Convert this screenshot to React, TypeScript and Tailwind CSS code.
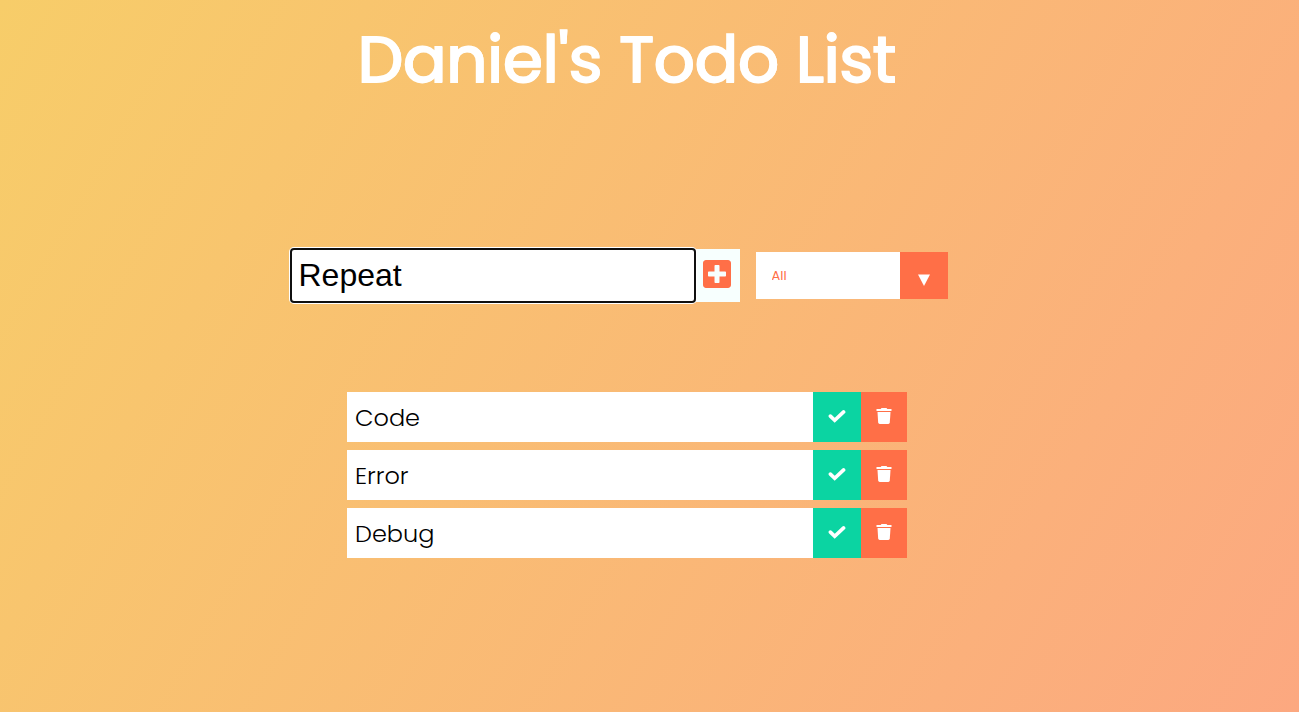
import { useState } from "react";
import type { FormEvent } from "react";
import { FaPlusSquare } from "react-icons/fa";

type Todo = { id: number; text: string; completed: boolean };

const initialTodos: Todo[] = [
  { id: 1, text: "Code", completed: false },
  { id: 2, text: "Error", completed: false },
  { id: 3, text: "Debug", completed: false },
];

function CheckIcon() {
  return (
    <svg width="18" height="16" viewBox="0 0 18 16" fill="none" aria-hidden="true">
      <path
        d="M2.4 8.1L6.7 12.2L15.6 3.9"
        stroke="currentColor"
        strokeWidth="3.6"
        strokeLinecap="round"
        strokeLinejoin="miter"
      />
    </svg>
  );
}

function TrashIcon() {
  return (
    <svg width="16" height="16" viewBox="0 0 16 16" fill="currentColor" aria-hidden="true">
      <path d="M0.5 1H4.7L5.2 0.3Q5.4 0 5.8 0H10.2Q10.6 0 10.8 0.3L11.3 1H15.5V3H0.5Z" />
      <path d="M1.5 4H14.5L13.8 14.6Q13.7 16 12.3 16H3.7Q2.3 16 2.2 14.6Z" />
    </svg>
  );
}

export default function App() {
  const [todos, setTodos] = useState(initialTodos);
  const [text, setText] = useState("Repeat");
  const [filter, setFilter] = useState("all");

  const addTodo = (event: FormEvent) => {
    event.preventDefault();
    if (!text.trim()) return;
    setTodos([...todos, { id: Date.now(), text, completed: false }]);
    setText("");
  };

  const visible = todos.filter(
    (todo) => filter === "all" || todo.completed === (filter === "completed"),
  );

  return (
    <div className="flex min-h-screen flex-col items-center bg-[linear-gradient(120deg,#f7cd69_0%,#fca880_100%)] pr-[45px] font-['Poppins','Inter',sans-serif]">
      <header className="pt-3">
        <h1 className="text-[64px] leading-[96px] font-normal whitespace-nowrap text-white [-webkit-text-stroke:2px_white] [text-shadow:1px_0_white]">
          Daniel's Todo List
        </h1>
      </header>

      <form onSubmit={addTodo} className="mt-[141px] flex items-center">
        <div className="flex">
          <input
            type="text"
            aria-label="New todo"
            value={text}
            onChange={(event) => setText(event.target.value)}
            className="z-10 -my-px -ml-px h-[55px] w-[406px] rounded-sm border-2 border-[#101010] bg-white px-[7px] font-['Liberation_Sans',Arial,sans-serif] text-[32px] leading-9 text-black ring-1 ring-white outline-none"
          />
          <button
            type="submit"
            aria-label="Add todo"
            className="flex h-[53px] w-11 items-center justify-center bg-[#f7fffe] pr-px text-[#ff6f47]"
          >
            <FaPlusSquare size={32} className="-mt-1" />
          </button>
        </div>
        <div className="relative mx-4">
          <select
            aria-label="Filter todos"
            value={filter}
            onChange={(event) => setFilter(event.target.value)}
            className="block h-[47px] w-48 cursor-pointer appearance-none bg-white px-4 text-[13px] text-[#ff6f47] outline-none"
          >
            <option value="all">All</option>
            <option value="completed">Completed</option>
            <option value="uncompleted">Uncompleted</option>
          </select>
          <span
            aria-hidden="true"
            className="pointer-events-none absolute inset-y-0 right-0 flex w-12 items-center justify-center bg-[#ff6f47] pt-2 text-white"
          >
            <svg width="12" height="12" viewBox="0 0 12 12" fill="currentColor">
              <path d="M0 0.5H12L6 12Z" />
            </svg>
          </span>
        </div>
      </form>

      <ul className="mt-[90px] flex w-[560px] flex-col gap-2">
        {visible.map((todo) => (
          <li key={todo.id} className="flex h-[50px] bg-white text-2xl font-light text-black">
            <span
              className={
                todo.completed
                  ? "flex flex-1 items-center px-2 pt-0.5 line-through opacity-50"
                  : "flex flex-1 items-center px-2 pt-0.5"
              }
            >
              {todo.text}
            </span>
            <button
              type="button"
              aria-label={`Complete ${todo.text}`}
              onClick={() =>
                setTodos(
                  todos.map((item) =>
                    item.id === todo.id ? { ...item, completed: !item.completed } : item,
                  ),
                )
              }
              className="flex w-12 items-center justify-center bg-[#0bd4a2] pb-0.5 text-white"
            >
              <CheckIcon />
            </button>
            <button
              type="button"
              aria-label={`Delete ${todo.text}`}
              onClick={() => setTodos(todos.filter((item) => item.id !== todo.id))}
              className="flex w-[46px] items-center justify-center bg-[#ff6f47] pb-0.5 text-white"
            >
              <TrashIcon />
            </button>
          </li>
        ))}
      </ul>
    </div>
  );
}
